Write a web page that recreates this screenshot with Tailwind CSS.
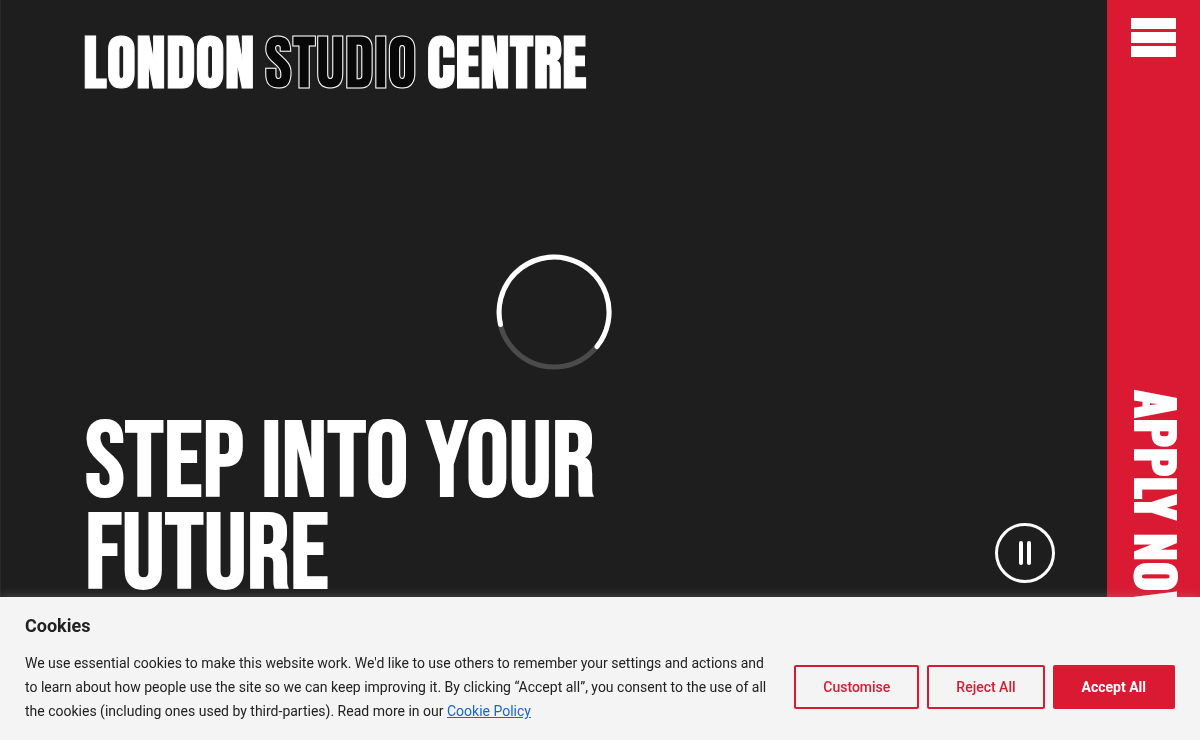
<!DOCTYPE html>
<html lang="en">
  <head>
    <meta charset="UTF-8" />
    <meta name="viewport" content="width=device-width, initial-scale=1.0">
    <title>London Studio Centre</title>
    <script src="https://cdn.jsdelivr.net/npm/@tailwindcss/browser@4"></script>
  </head>
  <body class="bg-[#1e1e1e] text-white font-['Roboto',sans-serif]">
    <div class="flex h-screen overflow-hidden">
      <main class="flex-1 min-w-0 flex flex-col border-l border-[#292929]">
        <header class="h-[126px] shrink-0 flex items-center pl-[82px]">
          <a href="#" class="flex gap-[10px] text-[60px] leading-none font-['Anton',sans-serif] [-webkit-text-stroke:1px_white]">
            <span>LONDON</span>
            <span class="text-[#080808]">STUDIO</span>
            <span>CENTRE</span>
          </a>
        </header>

        <div class="pt-32 flex justify-center" role="status" aria-label="Loading video">
          <svg class="w-29 h-29" viewBox="0 0 116 116" fill="none" stroke-width="5">
            <circle cx="58" cy="58" r="55" stroke="#4b4b4b" />
            <path d="M4.5 70.5A55 55 0 1 1 101 92.500" stroke="white" stroke-linecap="round" />
          </svg>
        </div>

        <div class="mt-12 flex items-end justify-between pl-[84px] pr-13">
          <h1 class="text-[107px] leading-[92px] font-normal font-['Bebas_Neue',sans-serif] [-webkit-text-stroke:2px_white]">STEP INTO YOUR<br>FUTURE</h1>
          <button type="button" aria-label="Pause video" class="mb-[19px]">
            <svg class="w-[60px] h-[60px]" viewBox="0 0 60 60" fill="none" stroke="white">
              <circle cx="30" cy="30" r="28.500" stroke-width="3" />
              <path d="M26 20v20M34 20v20" stroke-width="4" stroke-linecap="round" />
            </svg>
          </button>
        </div>
      </main>

      <aside class="w-[93px] shrink-0 bg-[#da1a32] flex flex-col items-center">
        <button type="button" aria-label="Menu" class="mt-[18px] flex flex-col gap-[3px]">
          <span class="block w-[45px] h-[11px] bg-white"></span>
          <span class="block w-[45px] h-[11px] bg-white"></span>
          <span class="block w-[45px] h-[11px] bg-white"></span>
        </button>
        <a href="#" class="mt-[333px] pl-2 [writing-mode:vertical-rl] whitespace-nowrap text-[51px] leading-none font-bold font-['Oswald',sans-serif] [-webkit-text-stroke:2px_white]">APPLY NOW</a>
      </aside>
    </div>

    <!-- cookie banner -->
    <section class="fixed inset-x-0 bottom-0 px-[25px] pt-4 pb-[17px] bg-[#f4f4f4] text-[#212121] shadow-[0_-1px_10px_0_#acabab4d]">
      <h2 class="mb-3 text-lg leading-[26px] font-bold">Cookies</h2>
      <div class="flex items-center gap-6">
        <p class="flex-1 text-sm leading-6">We use essential cookies to make this website work. We'd like to use others to remember your settings and actions and to learn about how people use the site so we can keep improving it. By clicking “Accept all”, you consent to the use of all the cookies (including ones used by third-parties). Read more in our <a href="#" class="text-[#1863dc] underline">Cookie Policy</a></p>
        <div class="flex gap-2 text-sm font-medium">
          <button type="button" class="h-11 px-[27px] border-2 border-[#da1a32] rounded-xs text-[#da1a32]">Customise</button>
          <button type="button" class="h-11 px-[27px] border-2 border-[#da1a32] rounded-xs text-[#da1a32]">Reject All</button>
          <button type="button" class="h-11 px-[27px] border-2 border-[#da1a32] rounded-xs bg-[#da1a32] text-white font-bold">Accept All</button>
        </div>
      </div>
    </section>
  </body>
</html>
